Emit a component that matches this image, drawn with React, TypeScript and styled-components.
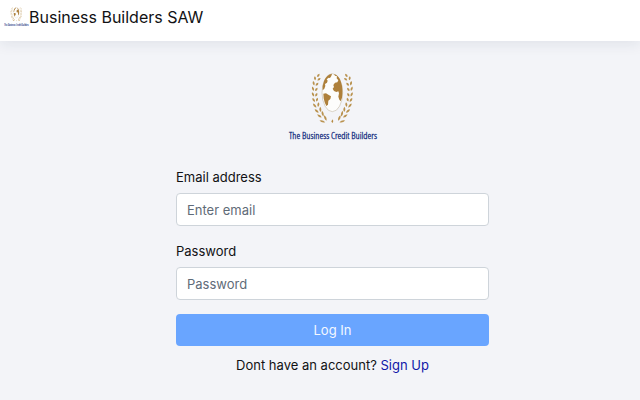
import React from "react";
import styled, { createGlobalStyle } from "styled-components";

const GlobalStyle = createGlobalStyle`
  *, *::before, *::after { box-sizing: border-box; }
  body {
    margin: 0;
    background: #f3f4f8;
    color: #111214;
    font-family: Inter, "Liberation Sans", sans-serif;
    font-size: 13px;
    line-height: 22px;
  }
`;

const Header = styled.header`
  display: flex;
  align-items: center;
  height: 41px;
  padding: 0 4px 7px;
  background: #fff;
  box-shadow: 0 4px 12px rgba(30, 45, 80, 0.08);
`;

const Brand = styled.span`
  font-size: 16px;
`;

const LogoSvg = styled.svg<{ $width: number }>`
  display: block;
  flex: none;
  width: ${(p) => p.$width}px;
  height: auto;
`;

const Main = styled.main`
  display: flex;
  flex-direction: column;
  align-items: center;
  padding: 31px 0 24px 25px;
`;

const Form = styled.form`
  display: flex;
  flex-direction: column;
  width: 100%;
  max-width: 313px;
  margin-top: 25px;
`;

const Field = styled.div`
  display: flex;
  flex-direction: column;
  gap: 5px;
  margin-bottom: 14px;
`;

const Input = styled.input`
  width: 100%;
  height: 33px;
  padding: 0 10px;
  border: 1px solid #ced4da;
  border-radius: 4px;
  background: #fff;
  color: #212529;
  font: inherit;
  &::placeholder { color: #5f6b78; opacity: 1; }
`;

const Submit = styled.button`
  height: 32px;
  border: 0;
  border-radius: 4px;
  background: #69a5ff;
  color: #f4f8ff;
  font: inherit;
`;

const Footnote = styled.p`
  margin: 8px 0 0;
  text-align: center;
`;

const Link = styled.a`
  color: #1018a8;
  text-decoration: none;
`;

// Leaves of the left branch: x, y, rotation in degrees, half length.
const leaves: [number, number, number, number][] = [
  [91, 10, 35, 6], [81, 19, -5, 6], [93, 22, 55, 6],
  [77, 34, -12, 7], [87, 37, 42, 6],
  [75, 50, -18, 7], [85, 52, 35, 6],
  [75, 67, -25, 7], [85, 68, 27, 6],
  [77, 84, -32, 7], [87, 83, 18, 6],
  [80, 101, -40, 8], [91, 98, 8, 7],
  [86, 117, -48, 8], [97, 112, -4, 8],
  [94, 132, -58, 8], [104, 125, -14, 9],
  [103, 148, -72, 9], [112, 138, -24, 9],
];

function Branch() {
  return (
    <g fill="#b9924f">
      {leaves.map(([x, y, r, h]) => (
        <path
          key={`${x}-${y}`}
          transform={`translate(${x} ${y}) rotate(${r})`}
          d={`M0 ${-h} Q6 0 0 ${h} Q-6 0 0 ${-h}Z`}
        />
      ))}
    </g>
  );
}

function Logo({ width }: { width: number }) {
  return (
    <LogoSvg $width={width} viewBox="0 0 270 207" role="img" aria-label="The Business Credit Builders">
      <Branch />
      <g transform="translate(266 0) scale(-1 1)">
        <Branch />
      </g>
      <ellipse cx="133" cy="62" rx="31" ry="57" fill="#fdfdfc" stroke="#c9bfae" strokeWidth="2" />
      <g fill="#ae803b">
        <path d="M132 5 Q116 7 108 27 Q102 43 104 55 L109 50 L112 42 L111 36 L117 32 L119 26 L116 22 L122 17 L126 18 L130 12Z" />
        <path d="M138 6 L141 11 L147 13 L146 19 L151 25 L148 31 L141 32 L136 39 L138 45 L134 50 L138 57 L145 60 L151 58 L153 64 L151 74 L154 83 L158 88 L162 77 Q166 51 159 30 Q153 10 138 6Z" />
        <path d="M106 65 L114 64 L121 68 L129 73 L127 81 L121 86 L120 98 L115 102 L110 91 L107 79Z" />
      </g>
      <path d="M133 142 L136 147 L134 153 L130 149Z" fill="#b68b42" />
      <text
        x="135"
        y="200"
        textAnchor="middle"
        fontFamily='"Liberation Sans Narrow", "Open Sans Condensed Light", "Open Sans Condensed", "Noto Sans", sans-serif'
        fontWeight="300"
        fontSize="29"
        fill="#1e3685"
        stroke="#1e3685"
        strokeWidth="1"
      >
        The Business Credit Builders
      </text>
    </LogoSvg>
  );
}

export default function App() {
  return (
    <>
      <GlobalStyle />
      <Header>
        <Logo width={25} />
        <Brand>Business Builders SAW</Brand>
      </Header>
      <Main>
        <Logo width={90} />
        <Form onSubmit={(e) => e.preventDefault()}>
          <Field>
            <label htmlFor="email">Email address</label>
            <Input id="email" type="email" placeholder="Enter email" />
          </Field>
          <Field>
            <label htmlFor="password">Password</label>
            <Input id="password" type="password" placeholder="Password" />
          </Field>
          <Submit type="submit">Log In</Submit>
          <Footnote>
            Dont have an account? <Link href="#signup">Sign Up</Link>
          </Footnote>
        </Form>
      </Main>
    </>
  );
}
